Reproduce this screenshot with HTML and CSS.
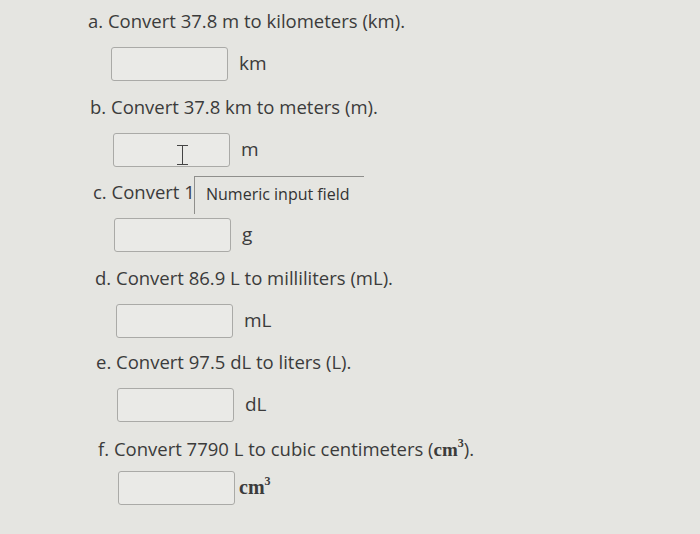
FILE: index.html
```html
<!DOCTYPE html>
<html>
<head>
<meta charset="utf-8">
<link rel="stylesheet" href="styles.css">
</head>
<body>
<div class="page">
  <div class="q q1">
    <p class="text">a. Convert 37.8 m to kilometers (km).</p>
    <div class="ans"><span class="box"></span><span class="unit">km</span></div>
  </div>
  <div class="q q2">
    <p class="text">b. Convert 37.8 km to meters (m).</p>
    <div class="ans"><span class="box"><span class="ibeam"></span></span><span class="unit">m</span></div>
  </div>
  <div class="q q3">
    <p class="text">c. Convert 1<span class="tip">Numeric input field</span></p>
    <div class="ans"><span class="box"></span><span class="unit">g</span></div>
  </div>
  <div class="q q4">
    <p class="text">d. Convert 86.9 L to milliliters (mL).</p>
    <div class="ans"><span class="box"></span><span class="unit">mL</span></div>
  </div>
  <div class="q q5">
    <p class="text">e. Convert 97.5 dL to liters (L).</p>
    <div class="ans"><span class="box"></span><span class="unit">dL</span></div>
  </div>
  <div class="q q6">
    <p class="text">f. Convert 7790 L to cubic centimeters (<span class="math">cm<sup>3</sup></span>).</p>
    <div class="ans"><span class="box"></span><span class="unit math mu">cm<sup>3</sup></span></div>
  </div>
</div>
</body>
</html>
```

FILE: styles.css
```css
html, body {
  margin: 0;
  padding: 0;
}
body {
  width: 700px;
  height: 534px;
  overflow: hidden;
  background: #e5e5e1;
  font-family: "Open Sans", "Liberation Sans", sans-serif;
  color: #3b3b3b;
}
.page {
  padding-top: 9px;
  display: flex;
  flex-direction: column;
}
.q {
  display: flex;
  flex-direction: column;
  gap: 14px;
  margin-bottom: 14px;
}
.text {
  margin: 0;
  font-size: 18.5px;
  line-height: 24px;
  height: 24px;
  position: relative;
  white-space: nowrap;
}
.ans {
  display: flex;
  align-items: center;
  gap: 11px;
}
.box {
  display: block;
  width: 115px;
  height: 32px;
  border: 1px solid #aaaaa7;
  border-radius: 3px;
  background: #eaeae7;
  position: relative;
}
.unit {
  font-size: 19px;
  line-height: 22px;
  margin-top: -2px;
}
.q1 { margin-left: 88px; }
.q1 .ans { margin-left: 23px; }
.q2 { margin-left: 90px; margin-bottom: 13px; }
.q2 .ans { margin-left: 23px; }
.q3 { margin-left: 93px; }
.q3 .ans { margin-left: 21px; }
.q4 { margin-left: 95px; margin-bottom: 12px; }
.q4 .ans { margin-left: 21px; }
.q5 { margin-left: 96px; margin-bottom: 15px; }
.q5 .ans { margin-left: 21px; }
.q6 { margin-left: 98px; gap: 10px; }
.q6 .ans { margin-left: 20px; gap: 4px; }
.ibeam {
  position: absolute;
  left: 68px;
  top: 11px;
  width: 1px;
  height: 20px;
  background: #444;
}
.ibeam::before, .ibeam::after {
  content: "";
  position: absolute;
  left: -5px;
  width: 11px;
  height: 1px;
  background: #444;
}
.ibeam::before { top: 0; }
.ibeam::after { bottom: 0; }
.tip {
  position: absolute;
  left: 101px;
  top: -4px;
  width: 170px;
  height: 38px;
  padding: 5px 0 0 11px;
  box-sizing: border-box;
  background: #e5e5e1;
  border-top: 1px solid #8f8f8c;
  border-left: 1px solid #8f8f8c;
  font-size: 16px;
  line-height: 24px;
  color: #333;
}
.math {
  font-family: "Liberation Serif", "DejaVu Serif", serif;
  font-weight: bold;
  font-size: 19px;
}
.math sup {
  font-size: 12px;
  line-height: 0;
  vertical-align: 0;
  position: relative;
  top: -9px;
}
.mu {
  font-size: 20px;
}
```
